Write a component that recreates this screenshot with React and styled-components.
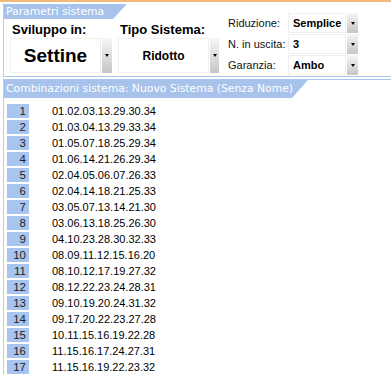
import React from "react";
import styled, { createGlobalStyle } from "styled-components";

const GlobalStyle = createGlobalStyle`
	body {
		margin: 0;
		background: #fff;
		font-family: "Liberation Sans", Arial, sans-serif;
		color: #000;
	}
`;

const PAGE = styled.div`
	width: 391px;
	height: 378px;
	overflow: hidden;
	border-top: 2px solid #f3b978;
	box-sizing: border-box;
`;

const PANEL = styled.div`
	margin-left: 3px;
	margin-top: ${(p) => p.mt || 0}px;
	border-left: 1px solid #b5cdef;
	border-top: ${(p) => (p.topLine ? "1px solid #a9c5ee" : "none")};
	border-bottom: ${(p) => (p.bottomLine ? "1px solid #a9c5ee" : "none")};
`;

const TAB = styled.div`
	width: ${(p) => p.w}px;
	height: ${(p) => p.h}px;
	line-height: ${(p) => p.h}px;
	padding-left: 2px;
	background: #a7c3ec;
	color: #fff;
	font-family: "DejaVu Sans", Verdana, sans-serif;
	font-size: 10.8px;
	white-space: nowrap;
	clip-path: polygon(0 0, 100% 0, calc(100% - ${(p) => p.cut}px) 100%, 0 100%);
`;

const PARAMS = styled.div`
	display: flex;
	height: 73px;
`;

const LEFT = styled.div`
	display: flex;
	flex-direction: column;
	padding-top: 1px;
`;

const FIELDS = styled.div`
	display: flex;
	gap: 6px;
	padding-left: 6px;
	margin-top: 2px;
`;

const FIELD = styled.div`
	display: flex;
	flex-direction: column;
`;

const LABEL = styled.div`
	font-weight: bold;
	font-size: 13px;
	height: 17px;
	line-height: 17px;
	padding-left: 2px;
`;

const SELECT = styled.div`
	display: flex;
	gap: 1px;
	height: ${(p) => p.h}px;
`;

const BOX = styled.div`
	width: ${(p) => p.w}px;
	border: 1px solid #efefef;
	box-sizing: border-box;
	display: flex;
	align-items: center;
	justify-content: ${(p) => (p.left ? "flex-start" : "center")};
	padding-left: ${(p) => (p.left ? 4 : 0)}px;
	font-weight: bold;
	font-size: ${(p) => p.fs}px;
`;

const DROP = styled.div`
	width: ${(p) => p.w || 10}px;
	background: linear-gradient(to bottom, #f6f6f6, #c6c6c6);
	display: flex;
	align-items: center;
	justify-content: center;
	&::after {
		content: "";
		border-left: 2.5px solid transparent;
		border-right: 2.5px solid transparent;
		border-top: 3px solid #000;
	}
`;

const GRID = styled.div`
	display: grid;
	grid-template-columns: 59px 58px 11px;
	grid-auto-rows: 20px;
	row-gap: 1px;
	column-gap: 1px;
	margin-left: 9px;
	padding-top: 10px;
`;

const SMALL_LABEL = styled.div`
	font-size: 11px;
	display: flex;
	align-items: center;
	color: #111;
`;

const LIST = styled.div`
	padding-top: 5px;
`;

const ROW = styled.div`
	display: flex;
	align-items: center;
	height: 16px;
`;

const NUM = styled.div`
	width: 22px;
	height: 14px;
	margin-left: 3px;
	background: #a7c5ef;
	font-size: 11.5px;
	line-height: 14px;
	text-align: right;
	padding-right: 3px;
	box-sizing: border-box;
	color: #222;
`;

const COMBO = styled.div`
	margin-left: 23px;
	font-size: 11px;
`;

const combos = [
	"01.02.03.13.29.30.34",
	"01.03.04.13.29.33.34",
	"01.05.07.18.25.29.34",
	"01.06.14.21.26.29.34",
	"02.04.05.06.07.26.33",
	"02.04.14.18.21.25.33",
	"03.05.07.13.14.21.30",
	"03.06.13.18.25.26.30",
	"04.10.23.28.30.32.33",
	"08.09.11.12.15.16.20",
	"08.10.12.17.19.27.32",
	"08.12.22.23.24.28.31",
	"09.10.19.20.24.31.32",
	"09.17.20.22.23.27.28",
	"10.11.15.16.19.22.28",
	"11.15.16.17.24.27.31",
	"11.15.16.19.22.23.32",
];

const smallFields = [
	["Riduzione:", "Semplice"],
	["N. in uscita:", "3"],
	["Garanzia:", "Ambo"],
];

export default function App() {
	return (
		<PAGE>
			<GlobalStyle />
			<PANEL mt={1} bottomLine>
				<PARAMS>
					<LEFT>
						<TAB w={121} h={15} cut={14}>Parametri sistema</TAB>
						<FIELDS>
							<FIELD>
								<LABEL>Sviluppo in:</LABEL>
								<SELECT h={35}>
									<BOX w={91} fs={19}>Settine</BOX>
									<DROP />
								</SELECT>
							</FIELD>
							<FIELD>
								<LABEL>Tipo Sistema:</LABEL>
								<SELECT h={35}>
									<BOX w={91} fs={12}>Ridotto</BOX>
									<DROP w={9} />
								</SELECT>
							</FIELD>
						</FIELDS>
					</LEFT>
					<GRID>
						{smallFields.map(([label, value]) => (
							<React.Fragment key={label}>
								<SMALL_LABEL>{label}</SMALL_LABEL>
								<BOX w={58} fs={11} left>{value}</BOX>
								<DROP w={11} />
							</React.Fragment>
						))}
					</GRID>
				</PARAMS>
			</PANEL>
			<PANEL mt={2} topLine>
				<TAB w={302} h={18} cut={16}>Combinazioni sistema: Nuovo Sistema (Senza Nome)</TAB>
				<LIST>
					{combos.map((c, i) => (
						<ROW key={i}>
							<NUM>{i + 1}</NUM>
							<COMBO>{c}</COMBO>
						</ROW>
					))}
				</LIST>
			</PANEL>
		</PAGE>
	);
}
